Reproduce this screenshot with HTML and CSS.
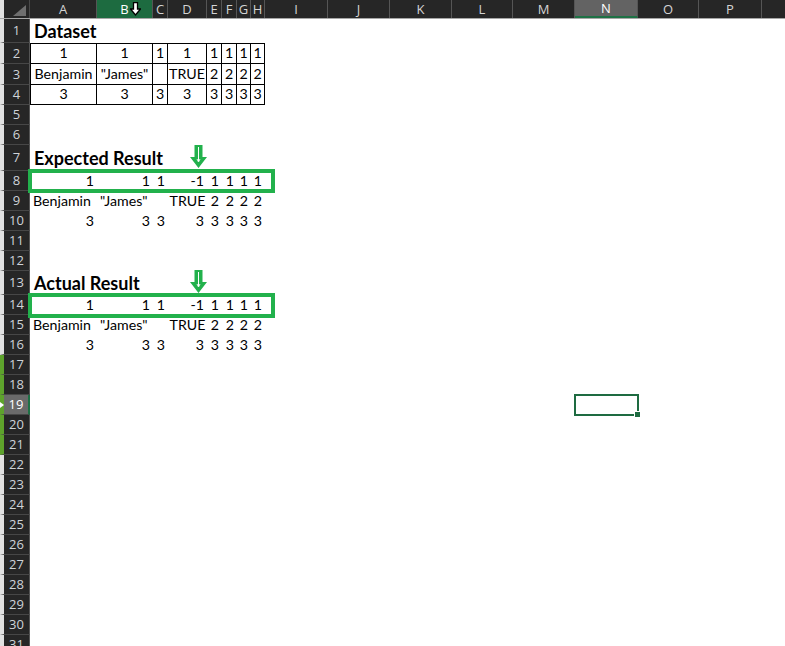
FILE: index.html
```html
<!DOCTYPE html>
<html>
<head>
<meta charset="utf-8">
<link rel="stylesheet" href="styles.css">
</head>
<body>
<div class="sheet">
  <div class="row hdr">
    <div class="corner"><svg width="13" height="11" viewBox="0 0 13 11"><polygon points="13,0 13,11 0,11" fill="#6f6f6f"/></svg></div>
    <div class="ch">A</div>
    <div class="ch colsel">B</div>
    <div class="ch">C</div>
    <div class="ch">D</div>
    <div class="ch">E</div>
    <div class="ch">F</div>
    <div class="ch">G</div>
    <div class="ch">H</div>
    <div class="ch">I</div>
    <div class="ch">J</div>
    <div class="ch">K</div>
    <div class="ch">L</div>
    <div class="ch">M</div>
    <div class="ch active">N</div>
    <div class="ch">O</div>
    <div class="ch">P</div>
    <div class="ch"></div>
  </div>

  <div class="row h24"><div class="rh">1</div><div class="c l title">Dataset</div></div>
  <div class="row h21"><div class="rh">2</div>
    <div class="c m b bt bl">1</div><div class="c m b bt">1</div><div class="c m b bt">1</div><div class="c m b bt">1</div>
    <div class="c m b bt">1</div><div class="c m b bt">1</div><div class="c m b bt">1</div><div class="c m b bt">1</div>
  </div>
  <div class="row h21"><div class="rh">3</div>
    <div class="c m b bl">Benjamin</div><div class="c m b">"James"</div><div class="c m b"></div><div class="c m b">TRUE</div>
    <div class="c m b">2</div><div class="c m b">2</div><div class="c m b">2</div><div class="c m b">2</div>
  </div>
  <div class="row"><div class="rh">4</div>
    <div class="c m b bl">3</div><div class="c m b">3</div><div class="c m b">3</div><div class="c m b">3</div>
    <div class="c m b">3</div><div class="c m b">3</div><div class="c m b">3</div><div class="c m b">3</div>
  </div>
  <div class="row"><div class="rh">5</div></div>
  <div class="row"><div class="rh">6</div></div>
  <div class="row h26"><div class="rh">7</div><div class="c l title">Expected Result</div></div>
  <div class="row"><div class="rh">8</div>
    <div class="c r">1</div><div class="c r">1</div><div class="c r">1</div><div class="c r">-1</div>
    <div class="c r">1</div><div class="c r">1</div><div class="c r">1</div><div class="c r">1</div>
  </div>
  <div class="row"><div class="rh">9</div>
    <div class="c l">Benjamin</div><div class="c l">"James"</div><div class="c"></div><div class="c m">TRUE</div>
    <div class="c r">2</div><div class="c r">2</div><div class="c r">2</div><div class="c r">2</div>
  </div>
  <div class="row"><div class="rh">10</div>
    <div class="c r">3</div><div class="c r">3</div><div class="c r">3</div><div class="c r">3</div>
    <div class="c r">3</div><div class="c r">3</div><div class="c r">3</div><div class="c r">3</div>
  </div>
  <div class="row"><div class="rh">11</div></div>
  <div class="row"><div class="rh">12</div></div>
  <div class="row h24"><div class="rh">13</div><div class="c l title">Actual Result</div></div>
  <div class="row"><div class="rh">14</div>
    <div class="c r">1</div><div class="c r">1</div><div class="c r">1</div><div class="c r">-1</div>
    <div class="c r">1</div><div class="c r">1</div><div class="c r">1</div><div class="c r">1</div>
  </div>
  <div class="row"><div class="rh">15</div>
    <div class="c l">Benjamin</div><div class="c l">"James"</div><div class="c"></div><div class="c m">TRUE</div>
    <div class="c r">2</div><div class="c r">2</div><div class="c r">2</div><div class="c r">2</div>
  </div>
  <div class="row"><div class="rh">16</div>
    <div class="c r">3</div><div class="c r">3</div><div class="c r">3</div><div class="c r">3</div>
    <div class="c r">3</div><div class="c r">3</div><div class="c r">3</div><div class="c r">3</div>
  </div>
  <div class="row"><div class="rh grn">17</div></div>
  <div class="row"><div class="rh grn">18</div></div>
  <div class="row"><div class="rh grn active"><span class="tri"></span>19</div></div>
  <div class="row"><div class="rh grn">20</div></div>
  <div class="row"><div class="rh grn">21</div></div>
  <div class="row"><div class="rh">22</div></div>
  <div class="row"><div class="rh">23</div></div>
  <div class="row"><div class="rh">24</div></div>
  <div class="row"><div class="rh">25</div></div>
  <div class="row"><div class="rh">26</div></div>
  <div class="row"><div class="rh">27</div></div>
  <div class="row"><div class="rh">28</div></div>
  <div class="row"><div class="rh">29</div></div>
  <div class="row"><div class="rh">30</div></div>
  <div class="row"><div class="rh">31</div></div>

  <!-- overlays -->
  <svg class="cursor" width="11" height="14" viewBox="0 0 11 14"><polygon points="3.5,0.5 7.5,0.5 7.5,7 10.5,7 5.5,13 0.5,7 3.5,7" fill="#fff" stroke="#000" stroke-width="1.3"/></svg>
  <div class="mark mark1"></div>
  <div class="mark mark2"></div>
  <svg class="arrow arrow1" width="17" height="24" viewBox="0 0 17 24"><polygon points="4.5,0 12.5,0 12.5,12 17,12 8.5,23 0,12 4.5,12" fill="#22b14c"/><line x1="8.5" y1="2" x2="8.5" y2="16" stroke="#fff" stroke-width="1"/><polyline points="7,14 8.5,17 10,14" fill="none" stroke="#fff" stroke-width="0.9"/></svg>
  <svg class="arrow arrow2" width="17" height="24" viewBox="0 0 17 24"><polygon points="4.5,0 12.5,0 12.5,12 17,12 8.5,23 0,12 4.5,12" fill="#22b14c"/><line x1="8.5" y1="2" x2="8.5" y2="16" stroke="#fff" stroke-width="1"/><polyline points="7,14 8.5,17 10,14" fill="none" stroke="#fff" stroke-width="0.9"/></svg>
  <div class="selcell"><span class="handle"></span></div>
</div>
</body>
</html>
```

FILE: styles.css
```css
html, body {
  margin: 0;
  padding: 0;
  background: #fff;
  overflow: hidden;
}
.sheet {
  position: relative;
  width: 785px;
  height: 646px;
  overflow: hidden;
  font-family: Lato, "Liberation Sans", sans-serif;
  font-size: 14.2px;
  color: #000;
}
.row {
  display: grid;
  grid-template-columns: 30px 67px 56px 15px 39px 15px 15px 14px 14px 63px 62px 62px 61px 62px 63px 61px 63px 40px;
  height: 20px;
}
.h21 { height: 21px; }
.h24 { height: 24px; }
.h26 { height: 26px; }
.hdr {
  height: 19px;
  background: #262626;
  border-bottom: 1px solid #a6a6a6;
  box-sizing: border-box;
}
.corner {
  box-sizing: border-box;
  border-left: 4px solid #e1e1e1;
  border-right: 1px solid #4a4a4a;
  display: flex;
  justify-content: flex-end;
  align-items: flex-end;
  padding: 0 3px 2px 0;
}
.ch {
  box-sizing: border-box;
  border-right: 1px solid #555;
  color: #d4d4d4;
  font-family: "Open Sans", "Liberation Sans", sans-serif;
  font-size: 13px;
  display: flex;
  align-items: center;
  justify-content: center;
  line-height: 1;
}
.ch.colsel {
  background: #1d6b40;
  color: #fff;
}
.ch.active {
  background: #636363;
  color: #fff;
  border-bottom: 2px solid #1e7145;
}
.rh {
  position: relative;
  box-sizing: border-box;
  background: #262626;
  border-left: 4px solid #e1e1e1;
  border-right: 1px solid #555;
  border-bottom: 1px solid #474747;
  color: #cfd3d8;
  font-family: "Open Sans", "Liberation Sans", sans-serif;
  font-size: 13px;
  display: flex;
  align-items: center;
  justify-content: center;
  line-height: 1;
}
.rh.grn { border-left-color: #5ea32c; }
.rh.active {
  background: #6a6a6a;
  color: #fff;
  border-right: 2px solid #1e7145;
}
.tri {
  position: absolute;
  left: -4px;
  top: 7px;
  width: 0;
  height: 0;
  border-top: 3px solid transparent;
  border-bottom: 3px solid transparent;
  border-left: 4px solid #fff;
}
.c {
  box-sizing: border-box;
  display: flex;
  align-items: center;
  padding: 0 3px;
  white-space: nowrap;
  line-height: 1;
}
.l { justify-content: flex-start; }
.r { justify-content: flex-end; }
.m { justify-content: center; padding: 0; }
.b {
  border-right: 1px solid #000;
  border-bottom: 1px solid #000;
}
.bt { border-top: 1px solid #000; }
.bl { border-left: 1px solid #000; }
.title {
  font-weight: bold;
  font-size: 18px;
  padding-left: 4px;
}
.cursor {
  position: absolute;
  left: 130px;
  top: 2px;
}
.mark {
  position: absolute;
  left: 28px;
  width: 247px;
  height: 24px;
  border: 4px solid #22b14c;
  box-sizing: border-box;
}
.mark1 { top: 169px; }
.mark2 { top: 293px; height: 25px; }
.arrow {
  position: absolute;
  left: 190px;
}
.arrow1 { top: 145px; }
.arrow2 { top: 270px; }
.selcell {
  position: absolute;
  left: 574px;
  top: 394px;
  width: 65px;
  height: 22px;
  border: 2px solid #1e6b41;
  box-sizing: border-box;
}
.handle {
  position: absolute;
  right: -4px;
  bottom: -4px;
  width: 5px;
  height: 5px;
  background: #1e6b41;
  border: 1px solid #fff;
}
```
